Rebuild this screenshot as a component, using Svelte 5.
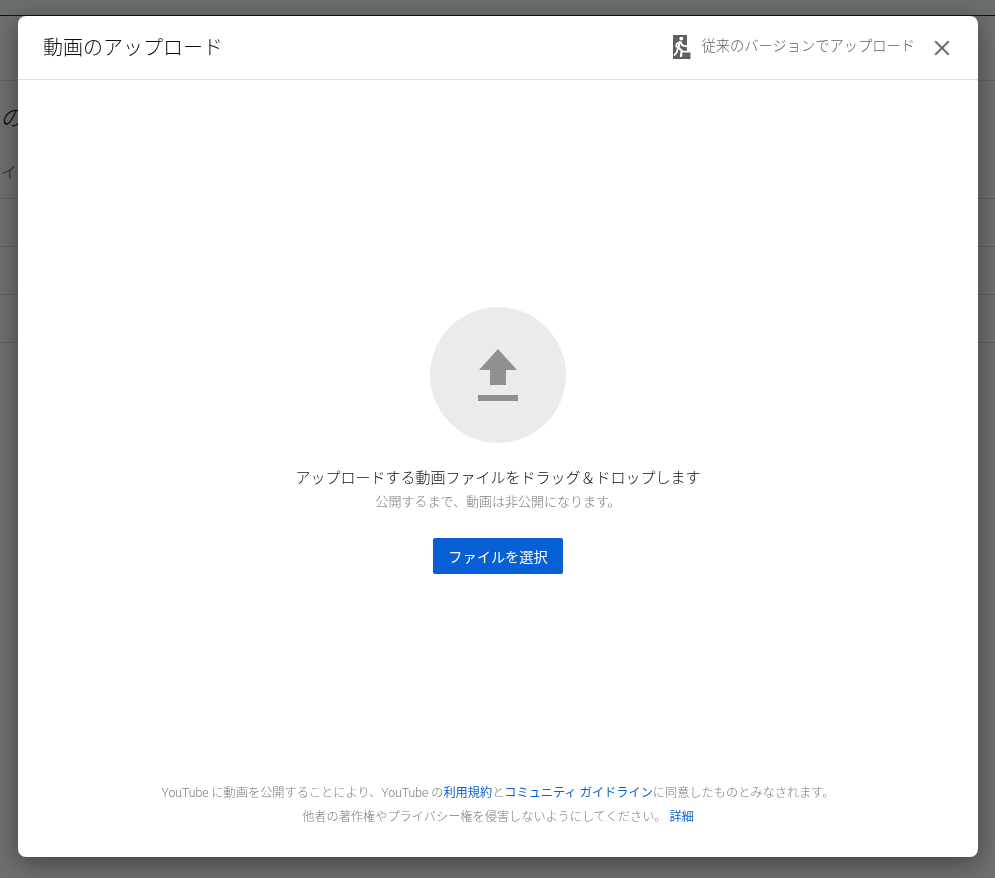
<script lang="ts">
	const bgRows = [0, 1, 2];
</script>

<div class="page">
	<div class="topbar"></div>
	<div class="subbar"></div>
	<div class="page-title">の動画</div>
	<div class="table-head">イトル</div>
	{#each bgRows as row}
		<div class="table-row" data-row={row}></div>
	{/each}
</div>
<div class="overlay"></div>

<div class="dialog">
	<header class="dialog-head">
		<h1>動画のアップロード</h1>
		<div class="legacy">
			<svg class="exit-icon" viewBox="0 0 18 24" width="18" height="24" aria-hidden="true">
				<path fill="#606060" d="M0 0h14v16.5h3.5V24H0z"/>
				<circle cx="8.3" cy="3.6" r="1.9" fill="#fff"/>
				<path fill="none" stroke="#fff" stroke-width="2.2" d="M7.4 6.4 5.2 12.4 8.6 15.5 8 22"/>
				<path fill="none" stroke="#fff" stroke-width="1.8" d="M5.2 12.4 3.6 17.5 1 20.5M7.4 6.6 3.6 9l-.4 3.4M7.6 7 9.4 10.4 14 11.4M8.6 15.5 9.6 16.6H17.5"/>
			</svg>
			<span>従来のバージョンでアップロード</span>
		</div>
		<button class="close" aria-label="閉じる">
			<svg viewBox="0 0 16 16" width="16" height="16" aria-hidden="true">
				<path d="M1.2 1.2l13.6 13.6M14.8 1.2L1.2 14.8" stroke="#6f6f6f" stroke-width="2" fill="none"/>
			</svg>
		</button>
	</header>

	<main class="dialog-body">
		<div class="upload-circle">
			<svg viewBox="0 0 40 52" width="40" height="52" aria-hidden="true">
				<path fill="#909090" d="M20 0l19 21H28v15H12V21H1z"/>
				<path fill="#909090" d="M0 46h40v6H0z"/>
			</svg>
		</div>
		<p class="drop-title">アップロードする動画ファイルをドラッグ＆ドロップします</p>
		<p class="drop-sub">公開するまで、動画は非公開になります。</p>
		<button class="select-btn">ファイルを選択</button>
	</main>

	<footer class="dialog-foot">
		<p>YouTube に動画を公開することにより、YouTube の<a href="#terms">利用規約</a>と<a href="#guidelines">コミュニティ ガイドライン</a>に同意したものとみなされます。</p>
		<p>他者の著作権やプライバシー権を侵害しないようにしてください。 <a href="#more">詳細</a></p>
	</footer>
</div>

<style>
	:global(body) {
		margin: 0;
		background: #fff;
		font-family: Roboto, "Noto Sans CJK JP", sans-serif;
		overflow: hidden;
	}
	.page {
		height: 878px;
		overflow: hidden;
		color: #0d0d0d;
	}
	.topbar {
		height: 15px;
		background: #f6fcff;
		border-bottom: 1px solid #002a66;
	}
	.subbar {
		height: 64px;
		border-bottom: 1px solid #e0e0e0;
	}
	.page-title {
		font-size: 23px;
		font-style: italic;
		font-weight: 300;
		line-height: 30px;
		margin: 23px 0 0 0;
		white-space: nowrap;
	}
	.table-head {
		font-size: 16px;
		font-weight: 300;
		line-height: 20px;
		margin: 29px 0 0 1px;
		padding-bottom: 15px;
		border-bottom: 1px solid #d8d8d8;
		white-space: nowrap;
		color: #555;
	}
	.table-row {
		height: 47px;
		border-bottom: 1px solid #d8d8d8;
	}
	.overlay {
		position: fixed;
		inset: 0;
		background: rgba(0, 0, 0, 0.57);
	}
	.dialog {
		position: fixed;
		left: 18px;
		top: 16px;
		width: 960px;
		height: 841px;
		background: #fff;
		border-radius: 8px;
		box-shadow: 0 6px 26px rgba(0, 0, 0, 0.4);
		display: flex;
		flex-direction: column;
		overflow: hidden;
	}
	.dialog-head {
		display: flex;
		align-items: center;
		height: 63px;
		flex: none;
		padding: 0 28px 0 25px;
		border-bottom: 1px solid #e0e0e0;
	}
	h1 {
		margin: 0 0 2px;
		font-size: 20px;
		font-weight: 300;
		color: #0d0d0d;
		flex: 1;
	}
	.legacy {
		display: flex;
		align-items: center;
		gap: 11px;
		color: #606060;
		font-size: 14.25px;
		font-weight: 300;
	}
	.legacy span {
		margin-top: -6px;
	}
	.exit-icon {
		display: block;
		margin-top: -2px;
	}
	.close {
		margin-left: 19px;
		padding: 0;
		border: 0;
		background: none;
		width: 16px;
		height: 16px;
	}
	.close svg {
		display: block;
	}
	.dialog-body {
		flex: 1;
		display: flex;
		flex-direction: column;
		align-items: center;
		padding-top: 227px;
	}
	.upload-circle {
		width: 136px;
		height: 136px;
		border-radius: 50%;
		background: #ebebeb;
		display: flex;
		align-items: center;
		justify-content: center;
	}
	.drop-title {
		margin: 24px 0 0;
		font-size: 15px;
		font-weight: 300;
		line-height: 22px;
		color: #0d0d0d;
	}
	.drop-sub {
		margin: 4px 0 0;
		font-size: 13px;
		font-weight: 300;
		line-height: 18px;
		color: #7a7a7a;
	}
	.select-btn {
		margin-top: 27px;
		width: 130px;
		height: 36px;
		border: 0;
		border-radius: 2px;
		background: #065fd4;
		color: #fff;
		font: inherit;
		font-size: 14.2px;
		padding: 0;
	}
	.dialog-foot {
		flex: none;
		text-align: center;
		padding-bottom: 28px;
		font-size: 12.2px;
		font-weight: 300;
		line-height: 24px;
		color: #7a7a7a;
	}
	.dialog-foot p {
		margin: 0;
	}
	.dialog-foot a {
		color: #065fd4;
		font-weight: 400;
		text-decoration: none;
	}
</style>
